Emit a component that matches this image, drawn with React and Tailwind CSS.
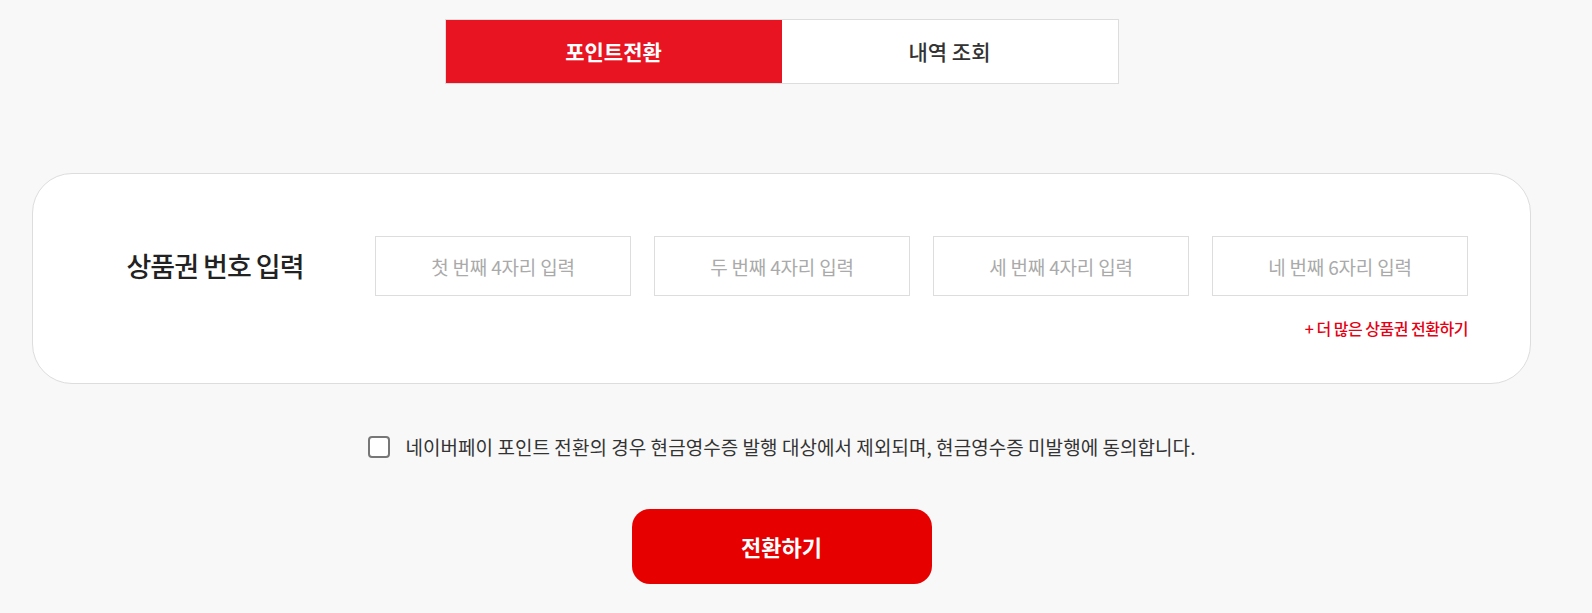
import React, { useState } from "react";

const FONT = { fontFamily: '"Noto Sans CJK KR", "Noto Sans", sans-serif' };

const Tabs = () => (
    <div className="flex w-[674px] h-[65px] border border-[#dddddd] bg-white mx-auto">
        <button className="flex-1 bg-[#e81421] text-white text-[21px] font-bold">포인트전환</button>
        <button className="flex-1 bg-white text-[#333333] text-[21px] font-medium">내역 조회</button>
    </div>
);

const placeholders = ["첫 번째 4자리 입력", "두 번째 4자리 입력", "세 번째 4자리 입력", "네 번째 6자리 입력"];

const App = () => {
    const [agree, setAgree] = useState(false);

    return (
        <div className="min-h-[613px] bg-[#f8f8f8]" style={FONT}>
            <div className="w-[1499px] ml-[32px] pt-[19px] pb-[30px]">
                <Tabs />

                <div className="mt-[89px] h-[211px] bg-white border border-[#dddddd] rounded-[40px] pt-[62px] pr-[62px]">
                    <div className="flex items-center">
                        <p className="w-[342px] pl-[22px] text-center text-[27px] font-medium text-[#222222] tracking-[-1px]">
                            상품권 번호 입력
                        </p>
                        <div className="flex gap-[23px]">
                            {placeholders.map((p) => (
                                <input
                                    key={p}
                                    placeholder={p}
                                    className="w-[256px] h-[60px] border border-[#dddddd] bg-white text-center text-[19px] text-[#333333] placeholder:text-[#aaaaaa] tracking-[-0.2px] outline-none"
                                />
                            ))}
                        </div>
                    </div>
                    <p className="mt-[20px] text-right text-[16px] font-medium text-[#e60012] tracking-[-0.5px]">+ 더 많은 상품권 전환하기</p>
                </div>

                <label className="mt-[49px] flex items-center justify-center gap-[16px] cursor-pointer">
                    <span
                        onClick={() => setAgree(!agree)}
                        className={`w-[22px] h-[22px] rounded-[4px] border-2 border-[#777777] flex items-center justify-center ${agree ? "bg-[#e60000] border-[#e60000]" : "bg-white"}`}
                    >
                        {agree && (
                            <svg width="14" height="14" viewBox="0 0 14 14" fill="none">
                                <path d="M2 7l3.5 3.5L12 3.5" stroke="white" strokeWidth="2" />
                            </svg>
                        )}
                    </span>
                    <span className="text-[19px] text-[#333333] tracking-[0.05px]">
                        네이버페이 포인트 전환의 경우 현금영수증 발행 대상에서 제외되며, 현금영수증 미발행에 동의합니다.
                    </span>
                </label>

                <div className="mt-[47px] flex justify-center">
                    <button className="w-[300px] h-[75px] rounded-[18px] bg-[#e60000] text-white text-[22px] font-bold">
                        전환하기
                    </button>
                </div>
            </div>
        </div>
    );
};

export default App;
